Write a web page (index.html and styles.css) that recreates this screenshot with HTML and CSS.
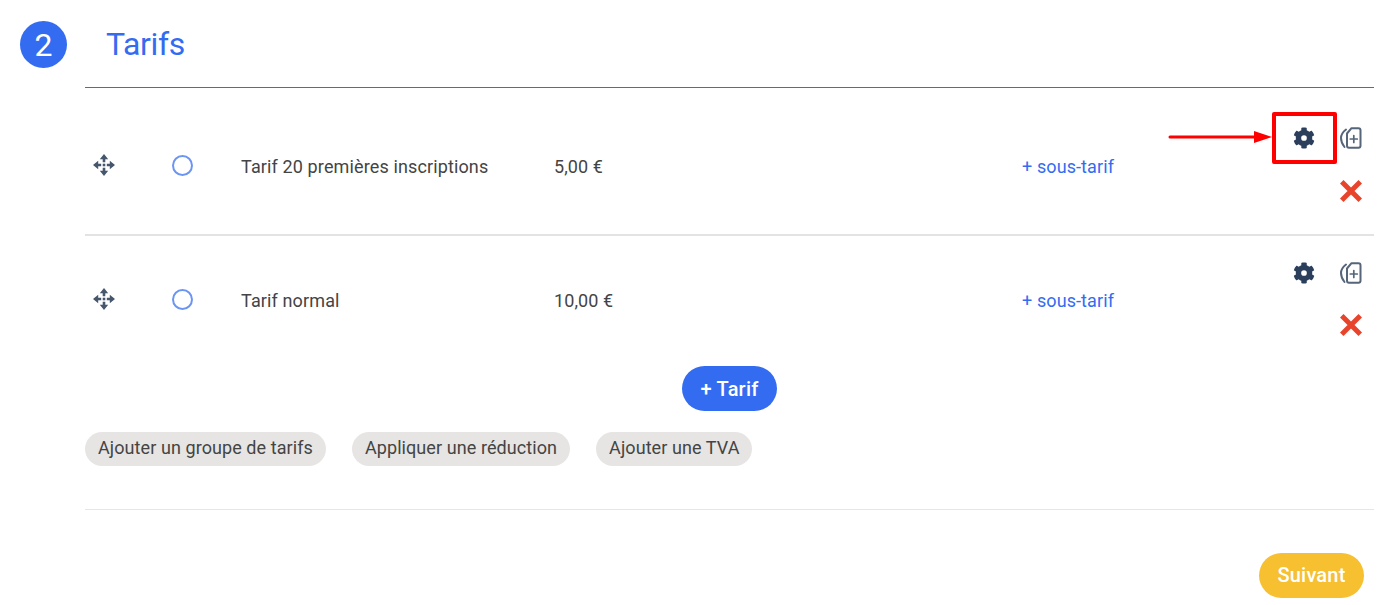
FILE: index.html
```html
<!DOCTYPE html>
<html lang="fr">
<head>
<meta charset="utf-8">
<title>Tarifs</title>
<link rel="stylesheet" href="styles.css">
</head>
<body>
<svg class="sprites" width="0" height="0" aria-hidden="true">
  <symbol id="i-move" viewBox="0 0 22 22">
    <path fill="#46566c" d="M11 0l4.200 5.200h-2.900v3h-2.600v-3H6.800zM11 22l-4.200-5.200h2.900v-3h2.600v3h2.900zM0 11l5.200-4.200v2.900h3v2.600h-3v2.900zM22 11l-5.200 4.200v-2.900h-3V9.700h3V6.800z"/>
    <path fill="#46566c" d="M9.700 9.700h2.600v2.600H9.700z"/>
  </symbol>
  <symbol id="i-gear" viewBox="0 0 512 512">
    <path fill="#2b3f5c" d="M487 316l-42-24a191 191 0 0 0 0-70l42-24c5-3 7-9 5-14-11-35-30-67-54-93-4-4-10-5-15-2l-42 24a188 188 0 0 0-61-35V29c0-6-4-11-9-12-37-8-74-8-109 0-5 1-9 6-9 12v49a194 194 0 0 0-61 35L90 89c-5-3-11-2-15 2-24 26-43 58-54 93-2 5 0 11 5 14l42 24a191 191 0 0 0 0 70l-42 24c-5 3-7 9-5 14 11 35 30 67 54 93 4 4 10 5 15 2l42-24a188 188 0 0 0 61 35v49c0 6 4 11 9 12 37 8 74 8 109 0 5-1 9-6 9-12v-49a194 194 0 0 0 61-35l42 24c5 3 11 2 15-2 24-26 43-58 54-93 2-5 0-11-5-14zM256 322a66 66 0 1 1 0-132 66 66 0 0 1 0 132z"/>
  </symbol>
  <symbol id="i-copy" viewBox="0 0 24 22">
    <g fill="none" stroke="#56657a" stroke-width="2" stroke-linecap="round" stroke-linejoin="round">
      <path d="M12.500 1.200h7a2 2 0 0 1 2 2v15.600a2 2 0 0 1-2 2h-9.500a2 2 0 0 1-2-2V6.500z"/>
      <path d="M7 2.500C4.500 4.500 2 8 2 11s1.500 6.500 3.500 9"/>
      <path d="M14.800 8.500v7M11.300 12h7" stroke-width="1.700"/>
    </g>
  </symbol>
  <symbol id="i-cross" viewBox="0 0 22 22">
    <path fill="none" stroke="#e8442c" stroke-width="5" stroke-linecap="square" d="M3.500 3.500l15 15M18.500 3.500l-15 15"/>
  </symbol>
</svg>

<main class="page">
  <header class="step">
    <span class="step-num">2</span>
    <h2 class="step-title">Tarifs</h2>
  </header>

  <section class="content">
    <div class="row row-first">
      <svg class="ico-move"><use href="#i-move"/></svg>
      <span class="radio"></span>
      <span class="label">Tarif 20 premières inscriptions</span>
      <span class="price">5,00 €</span>
      <a class="sub">+ sous-tarif</a>
      <div class="actions">
        <svg class="ico-gear"><use href="#i-gear"/></svg>
        <svg class="ico-copy"><use href="#i-copy"/></svg>
        <svg class="ico-cross"><use href="#i-cross"/></svg>
      </div>
    </div>
    <div class="row">
      <svg class="ico-move"><use href="#i-move"/></svg>
      <span class="radio"></span>
      <span class="label">Tarif normal</span>
      <span class="price">10,00 €</span>
      <a class="sub">+ sous-tarif</a>
      <div class="actions">
        <svg class="ico-gear"><use href="#i-gear"/></svg>
        <svg class="ico-copy"><use href="#i-copy"/></svg>
        <svg class="ico-cross"><use href="#i-cross"/></svg>
      </div>
    </div>

    <div class="add-wrap"><button class="btn-add">+ Tarif</button></div>

    <div class="chips">
      <span class="chip">Ajouter un groupe de tarifs</span>
      <span class="chip">Appliquer une réduction</span>
      <span class="chip">Ajouter une TVA</span>
    </div>
  </section>

  <div class="next-wrap"><button class="btn-next">Suivant</button></div>
</main>

<div class="mark-box"></div>
<svg class="mark-arrow" width="106" height="16" viewBox="0 0 106 16">
  <path d="M2 8h86" stroke="#f00" stroke-width="3" stroke-linecap="round"/>
  <path d="M86 2l18 6-18 6z" fill="#f00"/>
</svg>
</body>
</html>
```
FILE: styles.css
```css
* { box-sizing: border-box; }
html, body { margin: 0; padding: 0; background: #fff; height: 605px; overflow: hidden; }
body { font-family: Roboto, "Liberation Sans", sans-serif; color: #444; position: relative; }
.sprites { position: absolute; }
.page { padding: 21px 24px 0 20px; }

.step { display: flex; align-items: center; height: 47px; }
.step-num {
  width: 47px; height: 47px; border-radius: 50%;
  background: #336cf1; color: #fff; font-size: 32px;
  display: flex; align-items: center; justify-content: center;
}
.step-title { margin: 0 0 0 39px; font-size: 32px; font-weight: 400; color: #336cf1; line-height: 47px; letter-spacing: -.35px; }

.content { margin: 19px 0 0 65px; border-top: 1px solid #336cf1; }

.row {
  display: grid;
  grid-template-columns: 79px 69px 313px 468px 1fr auto;
  align-items: center;
  height: 117px;
  padding-top: 12px;
  font-size: 18px;
  letter-spacing: .1px;
  padding-left: 8px;
}
.row-first { height: 148px; border-bottom: 2px solid #e3e3e3; padding-top: 11px; }
.row .actions { margin-top: -3px; }
.row-first .actions { margin-top: -4px; row-gap: 30px; }
.ico-move { width: 22px; height: 22px; margin-top: -3px; }
.radio {
  width: 21px; height: 21px; border-radius: 50%;
  border: 2.500px solid #6b95f5; margin-top: -3px;
}
.label { letter-spacing: .13px; }
.sub { color: #336cf1; }

.actions {
  display: grid;
  grid-template-columns: 24px 24px;
  column-gap: 23px;
  row-gap: 29px;
  justify-items: center;
  align-items: center;
  margin-right: 11px;
}
.ico-gear { width: 22px; height: 22px; margin-left: -1px; }
.ico-copy { width: 24px; height: 22px; }
.ico-cross { width: 22px; height: 24px; grid-column: 2; }

.add-wrap { display: flex; justify-content: center; margin-top: 13px; }
.btn-add {
  width: 95px; height: 45px; border: 0; border-radius: 23px;
  background: #336cf1; color: #fff; font: 500 20px Roboto, sans-serif; letter-spacing: .2px; padding: 0;
}
.chips { display: flex; gap: 26px; margin-top: 21px; padding-bottom: 43px; border-bottom: 1px solid #e6e6e6; }
.chip {
  height: 34px; line-height: 32px; padding: 0 13px;
  background: #e6e5e3; border-radius: 17px; font-size: 18px; letter-spacing: .08px;
}
.next-wrap { display: flex; justify-content: flex-end; margin-top: 43px; margin-right: 10px; }
.btn-next {
  width: 105px; height: 45px; border: 0; border-radius: 23px;
  background: #f6c030; color: #fff; font: 500 20px Roboto, sans-serif; letter-spacing: .2px; padding: 0 0 2px;
}
.mark-box {
  position: absolute; left: 1272px; top: 112px; width: 65px; height: 52px;
  border: 4px solid #f00; border-radius: 2px;
}
.mark-arrow { position: absolute; left: 1168px; top: 129px; }
```
